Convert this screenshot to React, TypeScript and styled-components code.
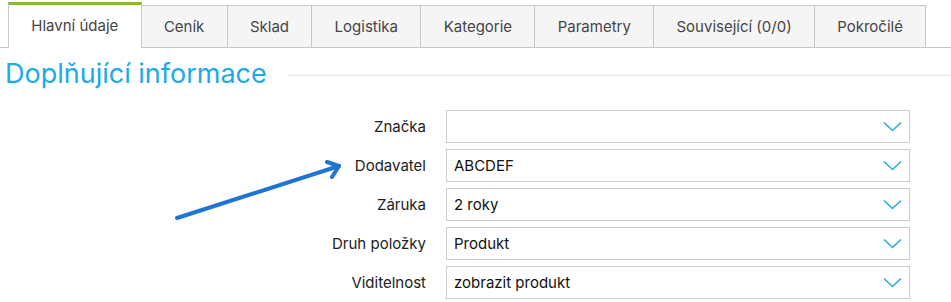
import React from 'react';
import styled, { createGlobalStyle } from 'styled-components';

const GlobalStyle = createGlobalStyle`
    body {
        margin: 0;
        background: #ffffff;
        font-family: Inter, "Noto Sans", sans-serif;
    }
`;

const StyledPage = styled.div`
    width: 951px;
    height: 302px;
    overflow: hidden;
    background: #ffffff;
`;

const StyledTabBar = styled.div`
    display: flex;
    align-items: flex-end;
    margin-top: 2px;
    padding-left: 9px;
    height: 45px;
    border-bottom: 1px solid #c6c6c6;
`;

const StyledTab = styled.div<{ $active?: boolean }>`
    display: flex;
    align-items: center;
    justify-content: center;
    box-sizing: border-box;
    height: ${({ $active }) => ($active ? '46px' : '42px')};
    margin-bottom: ${({ $active }) => ($active ? '-1px' : '0')};
    margin-left: -1px;
    padding: 0 22.3px;
    padding-bottom: ${({ $active }) => ($active ? '2px' : '0')};
    background: ${({ $active }) => ($active ? '#ffffff' : '#f5f5f5')};
    border: 1px solid #c6c6c6;
    border-top: ${({ $active }) =>
        $active ? '3px solid #8ab63a' : '1px solid #c6c6c6'};
    border-bottom: none;
    color: #454545;
    font-size: 15px;
    white-space: nowrap;
    position: relative;
    z-index: ${({ $active }) => ($active ? 1 : 0)};
`;

const StyledHeadingRow = styled.div`
    display: flex;
    align-items: center;
    gap: 20px;
    margin-top: 10px;
    padding-left: 5px;
`;

const StyledHeading = styled.h2`
    margin: 0;
    font-size: 27px;
    line-height: 32px;
    font-weight: 400;
    color: #20a9e7;
`;

const StyledRule = styled.div`
    flex: 1;
    height: 1px;
    margin-top: 3px;
    background: #e6e6e6;
`;

const StyledForm = styled.div`
    position: relative;
    display: grid;
    grid-template-columns: 426px 464px;
    column-gap: 20px;
    row-gap: 6px;
    margin-top: 20px;
    align-items: center;
`;

const StyledLabel = styled.label`
    text-align: right;
    font-size: 15px;
    color: #222222;
`;

const StyledSelect = styled.div`
    display: flex;
    align-items: center;
    justify-content: space-between;
    box-sizing: border-box;
    height: 33px;
    padding: 0 7px 0 7px;
    border: 1px solid #cdcdcd;
    background: #ffffff;
    font-size: 15px;
    color: #111111;
`;

const StyledArrow = styled.svg`
    position: absolute;
    left: 170px;
    top: 50px;
    pointer-events: none;
`;

const tabs = [
    'Hlavní údaje',
    'Ceník',
    'Sklad',
    'Logistika',
    'Kategorie',
    'Parametry',
    'Související (0/0)',
    'Pokročilé',
];

const fields = [
    { label: 'Značka', value: '' },
    { label: 'Dodavatel', value: 'ABCDEF' },
    { label: 'Záruka', value: '2 roky' },
    { label: 'Druh položky', value: 'Produkt' },
    { label: 'Viditelnost', value: 'zobrazit produkt' },
];

const Chevron = () => (
    <svg width="19" height="11" viewBox="0 0 19 11">
        <path
            d="M1 1.5 L9.5 9.5 L18 1.5"
            fill="none"
            stroke="#2aabe4"
            strokeWidth="1.6"
        />
    </svg>
);

export default function App() {
    return (
        <StyledPage>
            <GlobalStyle />
            <StyledTabBar>
                {tabs.map((tab, i) => (
                    <StyledTab key={tab} $active={i === 0}>
                        {tab}
                    </StyledTab>
                ))}
            </StyledTabBar>

            <StyledHeadingRow>
                <StyledHeading>Doplňující informace</StyledHeading>
                <StyledRule />
            </StyledHeadingRow>

            <StyledForm>
                {fields.map((field) => (
                    <React.Fragment key={field.label}>
                        <StyledLabel>{field.label}</StyledLabel>
                        <StyledSelect>
                            <span>{field.value}</span>
                            <Chevron />
                        </StyledSelect>
                    </React.Fragment>
                ))}
                {/* annotation arrow pointing at Dodavatel */}
                <StyledArrow width="180" height="70" viewBox="0 0 180 70">
                    <g
                        fill="none"
                        stroke="#1f74d3"
                        strokeWidth="4"
                        strokeLinecap="round"
                        strokeLinejoin="round"
                    >
                        <path d="M7 58 L169 6" />
                        <path d="M157 2 L169 6 L162 17" />
                    </g>
                </StyledArrow>
            </StyledForm>
        </StyledPage>
    );
}
